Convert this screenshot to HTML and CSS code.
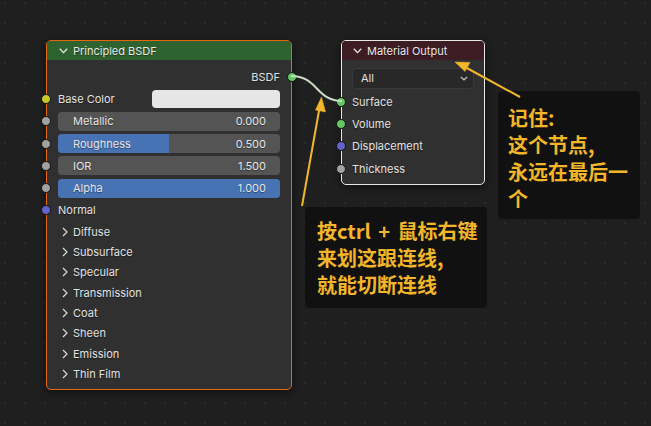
FILE: index.html
```html
<!DOCTYPE html>
<html>
<head>
<meta charset="utf-8">
<link rel="stylesheet" href="styles.css">
</head>
<body>
<div class="canvas">
  <div class="node principled">
    <div class="node-header header-green">
      <svg class="hchev" width="9" height="6" viewBox="0 0 9 6"><path d="M0.8 0.8 L4.5 4.6 L8.2 0.8" fill="none" stroke="#e8e8e8" stroke-width="1.3"/></svg>
      <span>Principled BSDF</span>
    </div>
    <div class="node-body">
      <div class="row row-out"><span>BSDF</span><i class="sock sock-right s-green"></i></div>
      <div class="row"><i class="sock s-yellow"></i><span class="grow">Base Color</span><div class="color-field"></div></div>
      <div class="row"><i class="sock s-gray"></i><div class="slider"><span>Metallic</span><span>0.000</span></div></div>
      <div class="row"><i class="sock s-gray"></i><div class="slider"><div class="fill" style="width:50%"></div><span>Roughness</span><span>0.500</span></div></div>
      <div class="row"><i class="sock s-gray"></i><div class="slider"><span>IOR</span><span>1.500</span></div></div>
      <div class="row"><i class="sock s-gray"></i><div class="slider"><div class="fill" style="width:100%"></div><span>Alpha</span><span>1.000</span></div></div>
      <div class="row"><i class="sock s-purple"></i><span>Normal</span></div>
      <div class="panel"><svg class="pchev" width="6" height="10" viewBox="0 0 6 10"><path d="M1 1 L5 5 L1 9" fill="none" stroke="#dcdcdc" stroke-width="1.2"/></svg><span>Diffuse</span></div>
      <div class="panel"><svg class="pchev" width="6" height="10" viewBox="0 0 6 10"><path d="M1 1 L5 5 L1 9" fill="none" stroke="#dcdcdc" stroke-width="1.2"/></svg><span>Subsurface</span></div>
      <div class="panel"><svg class="pchev" width="6" height="10" viewBox="0 0 6 10"><path d="M1 1 L5 5 L1 9" fill="none" stroke="#dcdcdc" stroke-width="1.2"/></svg><span>Specular</span></div>
      <div class="panel"><svg class="pchev" width="6" height="10" viewBox="0 0 6 10"><path d="M1 1 L5 5 L1 9" fill="none" stroke="#dcdcdc" stroke-width="1.2"/></svg><span>Transmission</span></div>
      <div class="panel"><svg class="pchev" width="6" height="10" viewBox="0 0 6 10"><path d="M1 1 L5 5 L1 9" fill="none" stroke="#dcdcdc" stroke-width="1.2"/></svg><span>Coat</span></div>
      <div class="panel"><svg class="pchev" width="6" height="10" viewBox="0 0 6 10"><path d="M1 1 L5 5 L1 9" fill="none" stroke="#dcdcdc" stroke-width="1.2"/></svg><span>Sheen</span></div>
      <div class="panel"><svg class="pchev" width="6" height="10" viewBox="0 0 6 10"><path d="M1 1 L5 5 L1 9" fill="none" stroke="#dcdcdc" stroke-width="1.2"/></svg><span>Emission</span></div>
      <div class="panel"><svg class="pchev" width="6" height="10" viewBox="0 0 6 10"><path d="M1 1 L5 5 L1 9" fill="none" stroke="#dcdcdc" stroke-width="1.2"/></svg><span>Thin Film</span></div>
    </div>
  </div>

  <div class="node output">
    <div class="node-header header-red">
      <svg class="hchev" width="9" height="6" viewBox="0 0 9 6"><path d="M0.8 0.8 L4.5 4.6 L8.2 0.8" fill="none" stroke="#e8e8e8" stroke-width="1.3"/></svg>
      <span>Material Output</span>
    </div>
    <div class="node-body out-body">
      <div class="dropdown"><span>All</span><svg width="8" height="5" viewBox="0 0 8 5"><path d="M0.8 0.8 L4 4 L7.2 0.8" fill="none" stroke="#cfcfcf" stroke-width="1.2"/></svg></div>
      <div class="row"><i class="sock s-green"></i><span>Surface</span></div>
      <div class="row"><i class="sock s-green"></i><span>Volume</span></div>
      <div class="row"><i class="sock s-purple"></i><span>Displacement</span></div>
      <div class="row"><i class="sock s-gray"></i><span>Thickness</span></div>
    </div>
  </div>

  <div class="note note-1">记住:<br>这个节点,<br>永远在最后一<br>个</div>
  <div class="note note-2"><span class="spaced">按ctrl + 鼠标右键</span><br>来划这跟连线,<br>就能切断连线</div>

  <svg class="overlay" width="651" height="426" viewBox="0 0 651 426">
    <path d="M291 76 C318 76 316 101 342 101" fill="none" stroke="#c9dcc3" stroke-width="2"/>
    <g fill="#f3b62b" stroke="#f3b62b">
      <line x1="302" y1="206" x2="319.5" y2="108" stroke-width="2"/>
      <path d="M321.5 97 L325.5 112 L315.5 110 Z" stroke-width="0.5"/>
      <line x1="520" y1="97" x2="465" y2="67" stroke-width="2"/>
      <path d="M455 62 L470 62.5 L465 71.5 Z" stroke-width="0.5"/>
    </g>
  </svg>
</div>
</body>
</html>
```

FILE: styles.css
```css
* { box-sizing: border-box; }
html, body { margin: 0; padding: 0; }
body {
  width: 651px;
  height: 426px;
  overflow: hidden;
  background: #1f1f1f;
  font-family: Inter, "Noto Sans", sans-serif;
}
.canvas {
  position: relative;
  width: 651px;
  height: 426px;
  background-color: #1f1f1f;
  background-image: radial-gradient(circle, #2a2a2a 0.9px, transparent 1.3px);
  background-size: 20px 20px;
  background-position: -5px -7px;
}
.node {
  position: absolute;
  background: #303030;
  border-radius: 5px;
  box-shadow: 0 2px 8px rgba(0,0,0,0.55);
  color: #e2e2e2;
  font-size: 11px;
}
.principled {
  left: 46px;
  top: 40px;
  width: 246px;
  border: 1.5px solid #e8680f;
  padding-bottom: 5px;
}
.output {
  left: 341px;
  top: 40px;
  width: 144px;
  border: 1.5px solid #e8e8e8;
  padding-bottom: 4px;
}
.node-header {
  display: flex;
  align-items: center;
  height: 19px;
  border-radius: 4px 4px 0 0;
  color: #e8e8e8;
  text-shadow: 0 1px 1px rgba(0,0,0,0.45);
}
.header-green { background: #2e6330; padding-left: 12px; }
.header-red { background: #3e1c24; padding-left: 11px; }
.hchev { margin-right: 5px; }
.node-body { padding-top: 5.5px; }
.out-body { padding-top: 7.5px; }
.row {
  position: relative;
  display: flex;
  align-items: center;
  height: 22.3px;
  padding: 0 11px;
  text-shadow: 0 1px 1px rgba(0,0,0,0.4);
}
.output .row { padding: 0 10px; }
.row-out { justify-content: flex-end; }
.grow { flex: 1; }
.sock {
  position: absolute;
  left: -6px;
  top: 50%;
  width: 10px;
  height: 10px;
  margin-top: -5px;
  border-radius: 50%;
  border: 1px solid #151515;
}
.sock-right { left: auto; right: -6px; }
.s-green { background: #63c763; }
.s-yellow { background: #c7c729; }
.s-gray { background: #a1a1a1; }
.s-purple { background: #6363c7; }
.color-field {
  width: 128px;
  height: 18px;
  border-radius: 4px;
  background: #e6e6e6;
}
.slider {
  position: relative;
  flex: 1;
  display: flex;
  justify-content: space-between;
  align-items: center;
  height: 19px;
  padding: 0 14px 0 15px;
  border-radius: 4px;
  background: #545454;
  overflow: hidden;
  color: #e6e6e6;
}
.slider .fill {
  position: absolute;
  left: 0;
  top: 0;
  bottom: 0;
  background: #4772b3;
}
.slider span { position: relative; }
.panel {
  display: flex;
  align-items: center;
  height: 20.3px;
  padding-left: 15px;
  text-shadow: 0 1px 1px rgba(0,0,0,0.4);
}
.pchev { margin-right: 5px; }
.dropdown {
  display: flex;
  align-items: center;
  justify-content: space-between;
  height: 21px;
  margin: 0 10px 2px 10px;
  padding: 0 5px 0 8px;
  border-radius: 4px;
  background: #282828;
  border: 1px solid #3a3a3a;
  color: #e2e2e2;
}
.note {
  position: absolute;
  background: #111111;
  border-radius: 4px;
  color: #f3b62b;
  font-family: "Noto Sans CJK SC", "Noto Sans", sans-serif;
  font-weight: 700;
  font-size: 20px;
  line-height: 27px;
}
.note-1 {
  left: 498px;
  top: 91px;
  width: 142px;
  height: 128px;
  padding: 13px 0 0 10px;
}
.note-2 {
  left: 305px;
  top: 207px;
  width: 182px;
  height: 101px;
  padding: 10px 0 0 12px;
}
.spaced { word-spacing: 3px; }
.overlay {
  position: absolute;
  left: 0;
  top: 0;
  pointer-events: none;
}
```
